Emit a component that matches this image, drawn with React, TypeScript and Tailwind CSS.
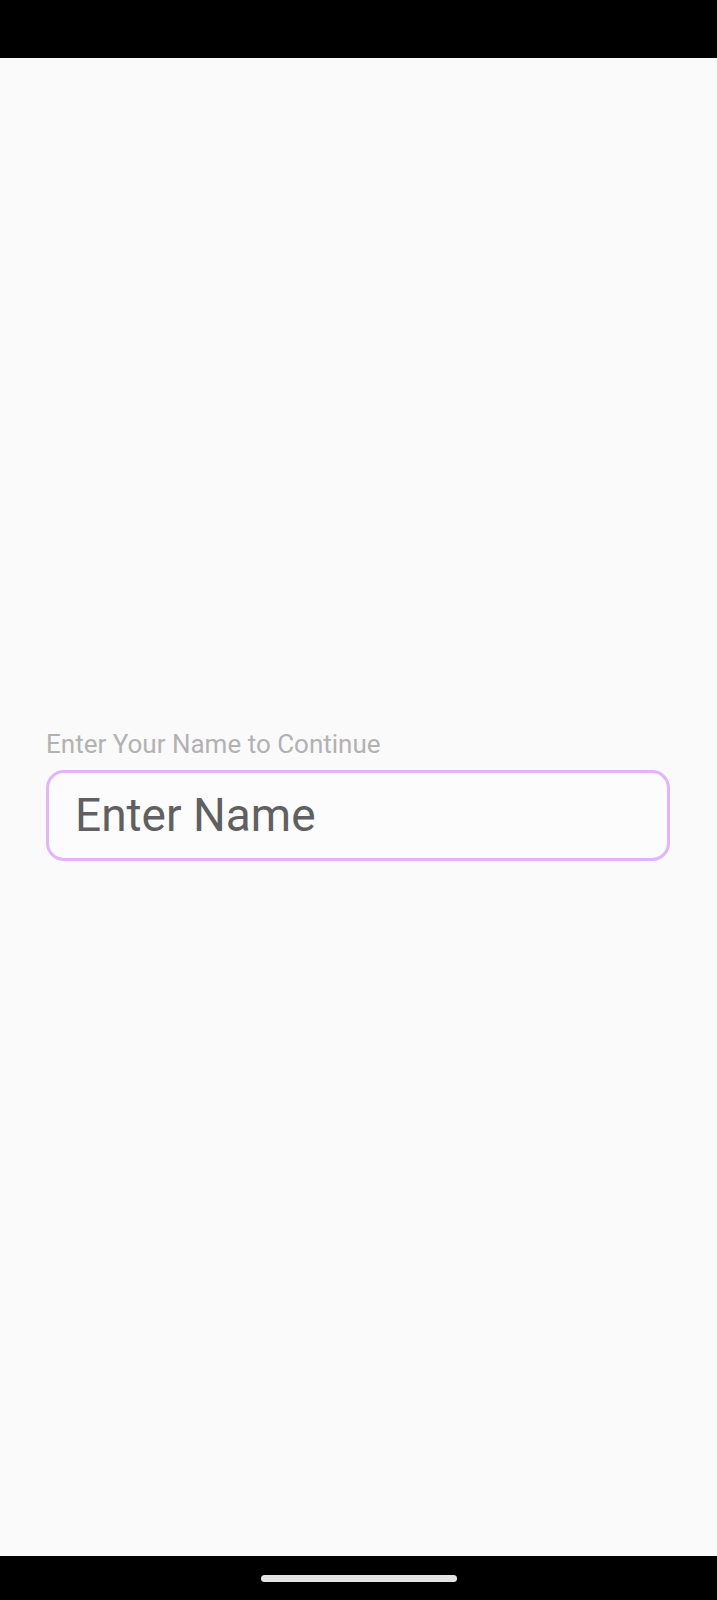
import { type FC } from 'react';

const StatusBar: FC = () => <div className="h-[58px] w-full bg-black shrink-0" />

const NavBar: FC = () => (
  <div className="h-[44px] w-full bg-black shrink-0 flex items-center justify-center">
    <div className="w-[196px] h-[7px] rounded-full bg-[#e4e4e4]" />
  </div>
)

const NameField: FC = () => {
  return (
    <div className="flex flex-col px-[46px] pt-[671px]">
      <label className="text-[26px] leading-[31px] text-[#b2b2b2]">Enter Your Name to Continue</label>
      <div className="mt-[10px] h-[91px] w-[624px] rounded-[18px] border-[3px] border-[#e2b4fb] bg-[#fcfcfc] flex items-center pl-[26px]">
        <span className="text-[46px] text-[#606060]">Enter Name</span>
      </div>
    </div>
  )
}

const App: FC = () => {
  return (
    <div
      className="w-[717px] h-[1600px] flex flex-col bg-[#fafafa]"
      style={{ fontFamily: 'Roboto, "Liberation Sans", sans-serif' }}
    >
      <StatusBar />
      <main className="flex-1 min-h-0">
        <NameField />
      </main>
      <NavBar />
    </div>
  )
}

export default App
